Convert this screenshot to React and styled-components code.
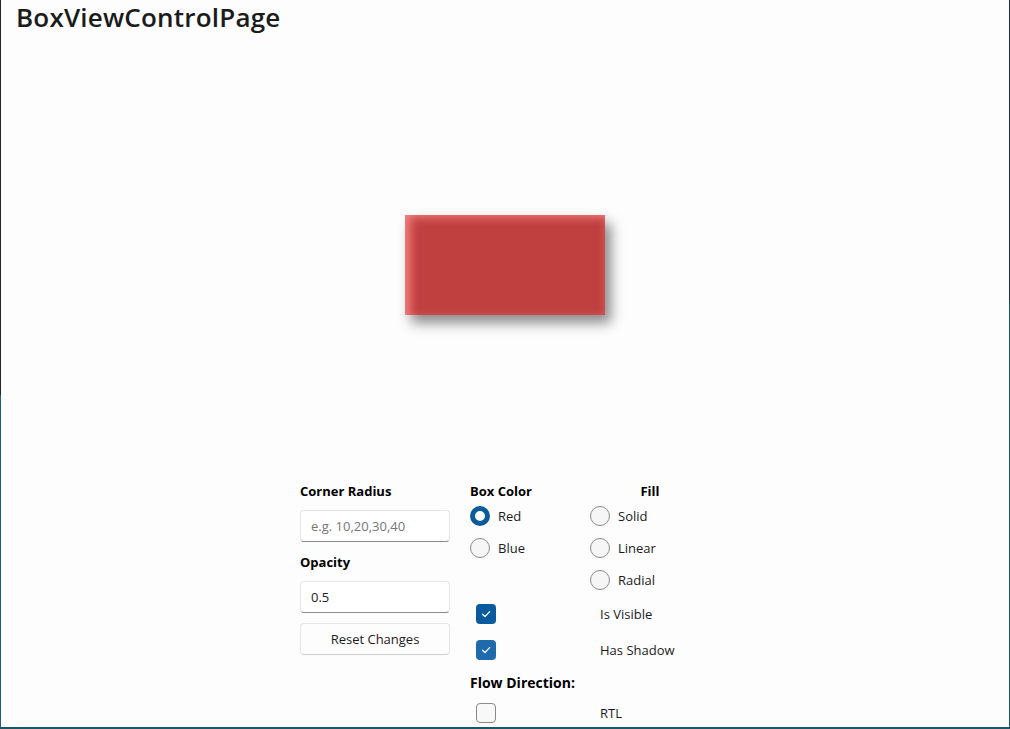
import styled, { createGlobalStyle } from 'styled-components';

const GlobalStyle = createGlobalStyle`
  html, body {
    margin: 0;
    padding: 0;
    background: #ffffff;
  }
  body {
    font-family: 'Open Sans', 'Noto Sans', sans-serif;
    color: #1b1b1b;
  }
`;

// window frame: dark top-left edge, teal lower edges
const Frame = styled.div`
  width: 1010px;
  height: 729px;
  box-sizing: border-box;
  overflow: hidden;
  display: flex;
  flex-direction: column;
  background:
    linear-gradient(#242424 0 395px, #1b6079 395px) left top / 1px 100% no-repeat,
    linear-gradient(#1f2c4c 0 300px, #1c5868 300px) right top / 1px 100% no-repeat,
    #fdfdfd;
  border-bottom: 2px solid #1b5568;
`;

const Title = styled.h1`
  flex-shrink: 0;
  margin: 0;
  padding: 0 16px;
  height: 36px;
  line-height: 34px;
  font-size: 26px;
  font-weight: 600;
  letter-spacing: 0.2px;
  color: #1b1b1b;
`;

const Stage = styled.div`
  flex-shrink: 0;
  height: 445px;
  display: flex;
  align-items: center;
  justify-content: center;
`;

const Box = styled.div`
  width: 200px;
  height: 100px;
  margin-top: 12px;
  background: #c04040;
  box-shadow:
    inset 9px 6px 10px -4px rgba(255, 140, 140, 0.85),
    inset -4px -3px 6px -3px rgba(255, 140, 140, 0.35),
    6px 8px 12px rgba(0, 0, 0, 0.45);
`;

const Controls = styled.div`
  flex-shrink: 0;
  display: flex;
  gap: 20px;
  margin-left: 300px;
`;

const LeftCol = styled.div`
  width: 150px;
  display: flex;
  flex-direction: column;
`;

const Label = styled.div`
  height: 20px;
  line-height: 20px;
  font-size: 13px;
  font-weight: 700;
  color: #000;
  text-align: ${(p) => (p.center ? 'center' : 'left')};
`;

const Input = styled.input`
  box-sizing: border-box;
  width: 150px;
  height: 32px;
  margin: 9px 0 10px;
  padding: 0 10px;
  border: 1px solid #e6e6e6;
  border-bottom-color: #8a8a8a;
  border-radius: 4px;
  background: #fff;
  font-family: inherit;
  font-size: 13px;
  color: #1b1b1b;
  outline: none;
  &::placeholder {
    color: #767676;
  }
`;

const Button = styled.button`
  box-sizing: border-box;
  width: 150px;
  height: 32px;
  border: 1px solid #e6e6e6;
  border-bottom-color: #d0d0d0;
  border-radius: 4px;
  background: #fdfdfd;
  font-family: inherit;
  font-size: 13px;
  color: #1b1b1b;
`;

const RightGrid = styled.div`
  display: grid;
  grid-template-columns: 120px 120px;
  grid-template-rows: 19px 32px 32px 32px 35px 38px 26px 36px;
  align-items: center;
`;

const Option = styled.div`
  display: flex;
  align-items: center;
  gap: 8px;
  font-size: 13px;
`;

const Radio = styled.span`
  box-sizing: border-box;
  width: 20px;
  height: 20px;
  border-radius: 50%;
  background: ${(p) => (p.checked ? '#fff' : '#f6f6f6')};
  border: ${(p) => (p.checked ? '5px solid #0a5a9e' : '1px solid #8a8a8a')};
`;

const Check = styled.span`
  box-sizing: border-box;
  width: 20px;
  height: 20px;
  margin-left: 6px;
  border-radius: 4px;
  display: grid;
  place-items: center;
  background: ${(p) => (p.checked ? p.tone || '#0a5a9e' : '#f8f8f8')};
  border: ${(p) => (p.checked ? 'none' : '1px solid #8a8a8a')};
`;

const CheckText = styled.div`
  padding-left: 10px;
  font-size: 13px;
`;

const Heading = styled.div`
  grid-column: 1 / span 2;
  font-size: 14px;
  font-weight: 700;
  color: #000;
`;

function Tick() {
  return (
    <svg width="12" height="12" viewBox="0 0 12 12">
      <path d="M2.5 6.3 L5 8.6 L9.6 3.6" fill="none" stroke="#fff" strokeWidth="1.3" strokeLinecap="round" strokeLinejoin="round" />
    </svg>
  );
}

function CheckBox({ checked, tone }) {
  return (
    <Check checked={checked} tone={tone}>
      {checked ? <Tick /> : null}
    </Check>
  );
}

export default function App() {
  return (
    <Frame>
      <GlobalStyle />
      <Title>BoxViewControlPage</Title>
      <Stage>
        <Box />
      </Stage>
      <Controls>
        <LeftCol>
          <Label>Corner Radius</Label>
          <Input placeholder='e.g. 10,20,30,40' />
          <Label>Opacity</Label>
          <Input defaultValue='0.5' />
          <Button>Reset Changes</Button>
        </LeftCol>
        <RightGrid>
          <Label>Box Color</Label>
          <Label center>Fill</Label>

          <Option><Radio checked />Red</Option>
          <Option><Radio />Solid</Option>

          <Option><Radio />Blue</Option>
          <Option><Radio />Linear</Option>

          <div />
          <Option><Radio />Radial</Option>

          <CheckBox checked />
          <CheckText>Is Visible</CheckText>

          <CheckBox checked tone='#1f69ad' />
          <CheckText>Has Shadow</CheckText>

          <Heading>Flow Direction:</Heading>

          <CheckBox />
          <CheckText>RTL</CheckText>
        </RightGrid>
      </Controls>
    </Frame>
  );
}
